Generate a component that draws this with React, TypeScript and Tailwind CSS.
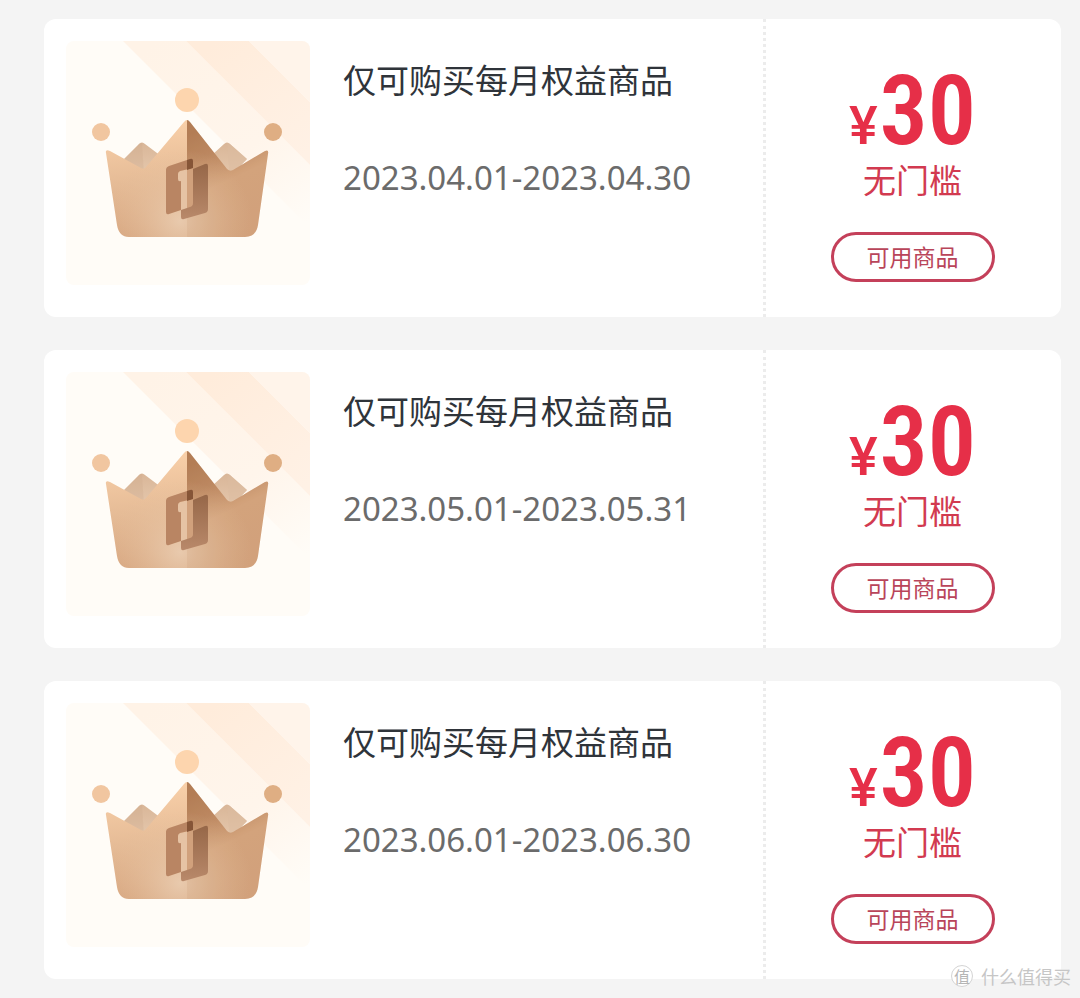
type Coupon = {
  id: string;
  title: string;
  period: string;
  amount: number;
  condition: string;
};

const coupons: Coupon[] = [
  { id: 'apr', title: '仅可购买每月权益商品', period: '2023.04.01-2023.04.30', amount: 30, condition: '无门槛' },
  { id: 'may', title: '仅可购买每月权益商品', period: '2023.05.01-2023.05.31', amount: 30, condition: '无门槛' },
  { id: 'jun', title: '仅可购买每月权益商品', period: '2023.06.01-2023.06.30', amount: 30, condition: '无门槛' },
];

function CrownArt({ id }: { id: string }) {
  const ref = (name: string) => `url(#${name}-${id})`;
  return (
    <svg viewBox="0 0 244 244" className="size-[244px] shrink-0 rounded-lg" aria-hidden="true">
      <defs>
        <linearGradient id={`band-${id}`} gradientUnits="userSpaceOnUse" x1="90" y1="0" x2="230" y2="190">
          <stop offset="0" stopColor="#fff3e7" />
          <stop offset="0.6" stopColor="#fff5eb" />
          <stop offset="1" stopColor="#fffcf7" />
        </linearGradient>
        <linearGradient id={`bandDeep-${id}`} gradientUnits="userSpaceOnUse" x1="150" y1="0" x2="244" y2="110">
          <stop offset="0" stopColor="#ffecdb" />
          <stop offset="1" stopColor="#fff1e5" />
        </linearGradient>
        <linearGradient id={`left-${id}`} gradientUnits="userSpaceOnUse" x1="80" y1="85" x2="90" y2="196">
          <stop offset="0" stopColor="#f8cfa8" />
          <stop offset="0.5" stopColor="#e5bb96" />
          <stop offset="1" stopColor="#d6a57f" />
        </linearGradient>
        <linearGradient id={`right-${id}`} gradientUnits="userSpaceOnUse" x1="130" y1="90" x2="180" y2="196">
          <stop offset="0" stopColor="#b37d55" />
          <stop offset="0.22" stopColor="#bd8861" />
          <stop offset="0.5" stopColor="#d8a881" />
          <stop offset="1" stopColor="#d6a580" />
        </linearGradient>
        <radialGradient id={`glow-${id}`} gradientUnits="userSpaceOnUse" cx="114" cy="180" r="72">
          <stop offset="0" stopColor="#ebcfb4" stopOpacity="0.85" />
          <stop offset="1" stopColor="#e6c09c" stopOpacity="0" />
        </radialGradient>
        <linearGradient id={`back-${id}`} x1="0" y1="0" x2="0" y2="1">
          <stop offset="0" stopColor="#d9b698" />
          <stop offset="1" stopColor="#e5c8ad" />
        </linearGradient>
        <linearGradient id={`plate-${id}`} x1="0" y1="0" x2="0" y2="1">
          <stop offset="0" stopColor="#966748" />
          <stop offset="1" stopColor="#b9896a" />
        </linearGradient>
        <clipPath id={`crown-${id}`}>
          <path d="M40 112Q39 108 44 110L75 127Q78 129 80 126L118 81Q121 77 124 81L161 128Q164 131 167 129L199 110Q203 108 202 113L192 184Q190 196 179 196H63Q53 196 51 184Z" />
        </clipPath>
      </defs>
      <rect width="244" height="244" fill="#fffcf7" />
      <path d="M57 0H120L244 124V187Z" fill={ref('band')} />
      <path d="M120 0H183L244 61V124Z" fill={ref('bandDeep')} />
      <path d="M183 0H244V61Z" fill="#fff4ea" />
      <circle cx="121" cy="59" r="12" fill="#fdd5ae" />
      <circle cx="35" cy="91" r="9" fill="#f1c6a0" />
      <circle cx="207" cy="91" r="9" fill="#dfae83" />
      <path d="M58 118L73 103Q76 100 79 103L95 115L77 134Z" fill={ref('back')} />
      <path d="M58 118L73 103Q74 101 76 102L78 134Z" fill="#cda98c" fillOpacity="0.3" />
      <path d="M146 114L158 103Q161 100 164 103L181 118L164 136Z" fill={ref('back')} />
      <path d="M161 102Q163 102 164 103L181 118L164 136Z" fill="#dcbba0" fillOpacity="0.5" />
      <g clipPath={ref('crown')}>
        <rect x="36" y="74" width="85" height="124" fill={ref('left')} />
        <rect x="121" y="74" width="85" height="124" fill={ref('right')} />
        <rect x="36" y="74" width="170" height="124" fill={ref('glow')} />
        <rect x="121" y="74" width="85" height="124" fill="#b8845c" fillOpacity="0.12" />
      </g>
      <path d="M112 131L127 127V163Q127 166 124 167L115 169V141L112 140Z" fill="#e6c3a4" />
      <path d="M121 129L127 127V163Q127 166 124 167L121 168Z" fill="#d1a17c" />
      <path d="M100 129Q100 126 103 125L124 118Q127 117 127 120V127L114 130Q112 131 112 133V138Q112 141 115 140V169L103 173Q100 174 100 171Z" fill="#b98563" />
      <path d="M127 128L139 123Q142 122 142 125V168Q142 171 139 172L118 178Q115 179 115 176V169L124 166Q127 165 127 162Z" fill={ref('plate')} />
      <path d="M121 119L124 118Q127 117 127 120V127L121 129Z" fill="#865537" />
    </svg>
  );
}

function CouponCard({ coupon }: { coupon: Coupon }) {
  return (
    <li className="flex rounded-xl bg-white">
      <div className="flex min-w-0 flex-1 gap-[33px] pt-[22px] pb-8 pl-[22px]">
        <CrownArt id={coupon.id} />
        <div className="min-w-0 pt-[14px]">
          <h2 className="text-[33px] leading-12 text-[#2f343a]">{coupon.title}</h2>
          <p className="mt-[51px] font-['Noto_Sans','Noto_Sans_CJK_SC',sans-serif] text-[33px] leading-12 text-[#6b6b6b]">
            {coupon.period}
          </p>
        </div>
      </div>
      <div className="flex w-[298px] shrink-0 flex-col items-center border-l-[3px] border-dotted border-[#ececec] pt-14 pr-0.5">
        <p className="flex items-baseline gap-0.5 text-[#e62f48]">
          <span className="font-['Roboto',sans-serif] text-[54px] leading-10 font-medium">¥</span>
          <span className="font-['Roboto_Condensed','Roboto',sans-serif] text-[96px] leading-[72px] font-semibold">
            {coupon.amount}
          </span>
        </p>
        <p className="mt-2 text-[33px] leading-12 text-[#d23a50]">{coupon.condition}</p>
        <button
          type="button"
          className="mt-[29px] h-[50px] w-[164px] rounded-full border-[3px] border-[#c4405a] pb-0.5 text-[23px] leading-none text-[#b9455a]"
        >
          可用商品
        </button>
      </div>
    </li>
  );
}

function Watermark() {
  return (
    <div className="absolute right-[9px] bottom-2 flex items-center gap-2 text-[#c6c6c6]">
      <span className="flex size-[22px] items-center justify-center rounded-full border border-[#d4d4d4] bg-white text-base leading-none text-[#b5b5b5]">
        值
      </span>
      <span className="text-[18px] leading-7">什么值得买</span>
    </div>
  );
}

export default function App() {
  return (
    <main className="relative min-h-screen bg-[#f4f4f4] pt-[19px] pr-[19px] pb-[18px] pl-11 font-['Noto_Sans_CJK_SC',sans-serif]">
      <ul className="flex flex-col gap-[33px]">
        {coupons.map((coupon) => (
          <CouponCard key={coupon.id} coupon={coupon} />
        ))}
      </ul>
      <Watermark />
    </main>
  );
}
